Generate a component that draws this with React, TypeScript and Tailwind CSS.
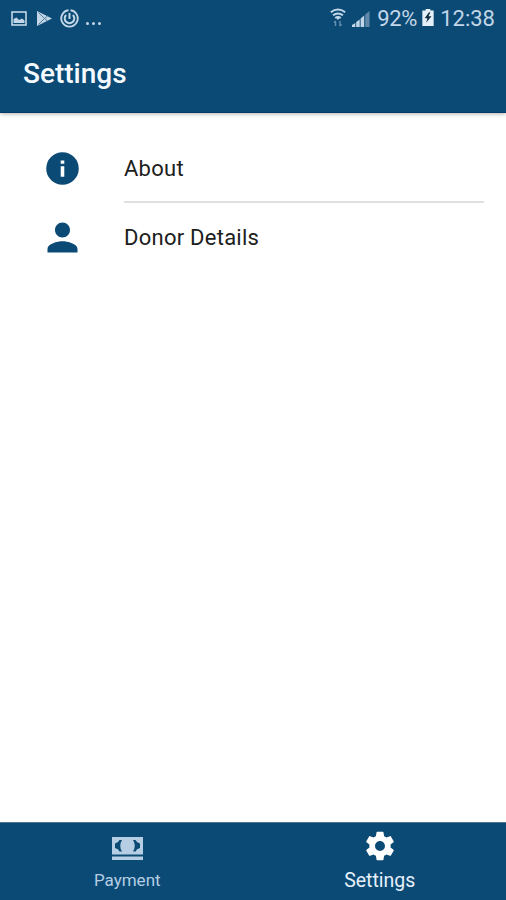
import type { ReactNode } from 'react';

function StatusBar() {
  return (
    <div className="flex h-9 items-center justify-between pl-[11px] pr-[11px] text-[#c3d6e7]">
      <div className="flex items-center">
        <svg width="16" height="15" viewBox="0 0 16 15" fill="none">
          <rect x="1" y="1" width="14" height="13" stroke="currentColor" strokeWidth="1.6" />
          <path d="M2.500 12V8l3-1.500 2.500 2.500L11 7.500l2.500 2V12z" fill="currentColor" />
        </svg>
        <svg className="ml-[10px]" width="15" height="15" viewBox="0 0 15 15">
          <path d="M0 0l15 7.500L0 15z" fill="currentColor" />
          <path d="M1.500 1.500l6 6-6 6M7.500 7.500l3-2.500M7.500 7.500l3 2.500" stroke="#4f7c9c" strokeWidth="1" fill="none" />
        </svg>
        <svg className="ml-[8px]" width="19" height="19" viewBox="0 0 19 19" fill="none" stroke="currentColor">
          <path d="M10.500 1.300a8.200 8.200 0 1 1-2 0" strokeWidth="1.9" />
          <path d="M6.200 5.900a4.800 4.800 0 1 0 6.600 0M9.500 4v6" strokeWidth="2" />
        </svg>
        <span className="ml-[7px] flex gap-[3px] pt-[11px]">
          <span className="size-[3px] rounded-full bg-current" />
          <span className="size-[3px] rounded-full bg-current" />
          <span className="size-[3px] rounded-full bg-current" />
        </span>
      </div>
      <div className="flex items-center">
        <svg className="mt-[-2px]" width="16" height="19" viewBox="0 0 16 19" fill="none" stroke="currentColor">
          <path d="M.8 4.200Q8-1.200 15.200 4.200M3 7.200q5-3.600 10 0M5.200 10q2.800-2 5.600 0" strokeWidth="2" />
          <path d="M8 12l-2.200-2.500h4.400z" fill="currentColor" stroke="none" />
          <path d="M5.500 18v-5M4 14.500L5.500 13M10 13v5M11.500 16.500L10 18" strokeWidth="1.4" opacity=".5" />
        </svg>
        <svg className="ml-[6px]" width="18" height="17" viewBox="0 0 18 17" fill="currentColor">
          <path d="M0 17v-2l3.300-2v4zM4.200 17v-5l3.500-2.500V17zM8.600 17V8.500l3.600-3V17z" />
          <path d="M13.200 17V4.500l4.300-3.500v16z" opacity=".45" />
        </svg>
        <span className="ml-[7px] mt-px w-[40px] whitespace-nowrap text-[22px] leading-9 tracking-[-0.35px]">92%</span>
        <svg className="ml-[5px] mt-[-1px]" width="12" height="17" viewBox="0 0 12 18">
          <path d="M3.500 0h5v1.500H12V18H0V1.500h3.500z" fill="#e4eff8" />
          <path d="M7 3.500L2.500 9.800h3L4 14.500l5.700-6.800H6.500l2-4.200z" fill="#102b40" />
        </svg>
        <span className="ml-[6px] mt-px whitespace-nowrap text-[22px] leading-9">12:38</span>
      </div>
    </div>
  );
}

function SettingsRow({ icon, label }: { icon: ReactNode; label: string }) {
  return (
    <div className="flex h-[69px] items-center pl-[40px]">
      <div className="flex w-[84px] items-center">{icon}</div>
      <span className="text-[22px] tracking-[0.25px] text-[#202020]">{label}</span>
    </div>
  );
}

function TabBar() {
  return (
    <nav className="flex h-[78px] border-t border-[#54738c] bg-[#0b4a75]">
      <div className="flex flex-1 flex-col items-center pl-[1px] text-[#b5cee3]">
        <svg className="mt-[14px]" width="31" height="23" viewBox="0 0 31 23">
          <path d="M0 0h31v17.500H0zM0 19.500h31V23H0z" fill="currentColor" />
          <path
            d="M7.500 3H10Q6.500 8.750 10 14.500H7.500Q6.500 11.800 3 11V6.500Q6.500 5.700 7.500 3zM23.500 3H21Q24.500 8.750 21 14.500H23.500Q24.500 11.800 28 11V6.500Q24.500 5.700 23.500 3z"
            fill="#0b4a75"
          />
        </svg>
        <span className="mt-[9px] text-[17px] leading-[22px]">Payment</span>
      </div>
      <div className="flex flex-1 flex-col items-center text-white">
        <svg className="mt-[6px]" width="34" height="34" viewBox="0 0 24 24" fill="currentColor">
          <path d="M19.430 12.980c.04-.32.07-.64.07-.98s-.03-.66-.07-.98l2.110-1.650c.19-.15.24-.42.12-.64l-2-3.460c-.12-.22-.39-.3-.61-.22l-2.490 1c-.52-.4-1.080-.73-1.690-.98l-.38-2.650C14.460 2.180 14.250 2 14 2h-4c-.25 0-.46.18-.49.42l-.38 2.650c-.61.25-1.170.59-1.690.98l-2.490-1c-.23-.09-.49 0-.61.22l-2 3.460c-.13.22-.07.49.12.64l2.110 1.650c-.04.32-.07.65-.07.98s.03.66.07.98l-2.110 1.650c-.19.15-.24.42-.12.64l2 3.460c.12.22.39.3.61.22l2.490-1c.52.4 1.080.73 1.690.98l.38 2.650c.03.24.24.42.49.42h4c.25 0 .46-.18.49-.42l.38-2.650c.61-.25 1.170-.59 1.690-.98l2.490 1c.23.09.49 0 .61-.22l2-3.460c.12-.22.07-.49-.12-.64l-2.110-1.650zM12 15.500c-1.930 0-3.500-1.570-3.500-3.500s1.570-3.500 3.500-3.500 3.500 1.570 3.500 3.500-1.570 3.500-3.500 3.500z" />
        </svg>
        <span className="mt-[7px] text-[19.500px] leading-[22px] text-[#e6f0fb]">Settings</span>
      </div>
    </nav>
  );
}

export default function App() {
  return (
    <div className="flex h-[900px] w-[506px] flex-col overflow-hidden bg-white font-['Roboto',sans-serif]">
      <header className="h-[113px] border-b border-[#083a68] bg-[#0b4a75] shadow-[0_1px_4px_rgba(0,0,0,0.3)]">
        <StatusBar />
        <h1 className="pl-[23px] pt-[20px] text-[28px] font-medium leading-9 text-[#f5faff]">Settings</h1>
      </header>

      <main className="flex-1 pt-[21px]">
        <SettingsRow
          label="About"
          icon={
            <svg className="ml-[3px]" width="39" height="39" viewBox="0 0 24 24">
              <circle cx="12" cy="12" r="10" fill="#0b4a75" />
              <path d="M10.900 7h2.200v2.100h-2.200zM10.900 10.600h2.200v6.400h-2.200z" fill="#fff" />
            </svg>
          }
        />
        <div className="ml-[124px] mr-[22px] mt-[-2px] h-[2px] bg-[#e0e0e0]" />
        <SettingsRow
          label="Donor Details"
          icon={
            <svg width="45" height="45" viewBox="0 0 24 24" fill="#0b4a75">
              <path d="M12 12c2.210 0 4-1.790 4-4s-1.790-4-4-4-4 1.790-4 4 1.790 4 4 4zm0 2c-2.670 0-8 1.340-8 4v2h16v-2c0-2.660-5.330-4-8-4z" />
            </svg>
          }
        />
      </main>

      <TabBar />
    </div>
  );
}
